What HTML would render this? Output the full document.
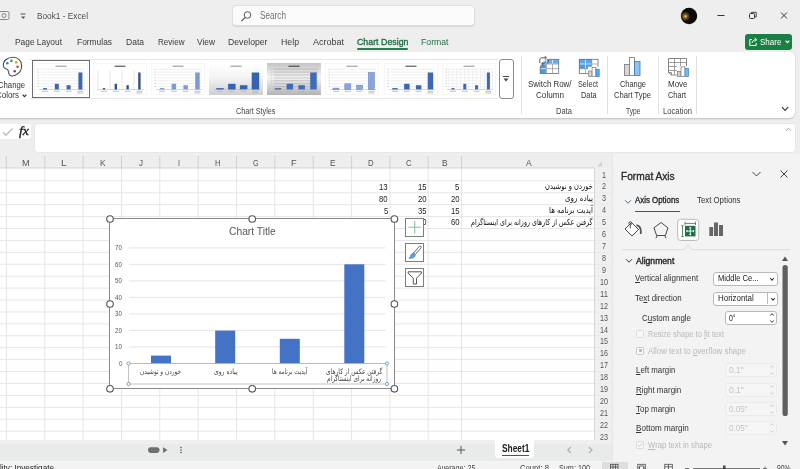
<!DOCTYPE html>
<html><head><meta charset="utf-8"><title>Book1 - Excel</title>
<style>
html,body{margin:0;padding:0;}
body{width:800px;height:469px;overflow:hidden;background:#eeeeef;font-family:"Liberation Sans","DejaVu Sans",sans-serif;color:#333;position:relative;font-size:10px;}
.a{position:absolute;white-space:nowrap;}
.t{position:absolute;white-space:nowrap;line-height:12px;height:12px;transform-origin:0 50%;}
.fa{font-family:"DejaVu Sans","Liberation Sans",sans-serif;}
.u{text-decoration:underline;}
</style></head><body><div id="app" style="position:absolute;left:0;top:0;width:800px;height:469px;will-change:transform">

<div id="t0" class="t" style="left:37px;top:10.30px;font-size:9.5px;color:#444;transform:scaleX(0.8699);text-shadow:0 0 1.500px #fff,0 0 2px #fff;">Book1 - Excel</div>
<svg class="a" style="left:0;top:8px" width="30" height="14" viewBox="0 0 30 14"><rect x="-2" y="3.5" width="11" height="8" rx="1.5" fill="none" stroke="#888" stroke-width="1"/><circle cx="4" cy="7.500" r="2" fill="none" stroke="#888"/><path d="M20.500 6h5" stroke="#555" stroke-width="1"/><path d="M21 8.500l2.200 2.400 2.200-2.400z" fill="#555"/></svg>
<div class="a" style="left:232px;top:5px;width:243px;height:21px;background:#fbfbfb;border:1px solid #dedede;border-radius:4px;box-sizing:border-box;box-shadow:0 1px 1px rgba(0,0,0,.10)"></div>
<svg class="a" style="left:240px;top:9.600px" width="13" height="13" viewBox="0 0 13 13"><circle cx="7.500" cy="5" r="3.300" fill="none" stroke="#555" stroke-width="1"/><path d="M5 7.600L1.500 11" stroke="#555" stroke-width="1.100"/></svg>
<div id="t1" class="t" style="left:259.5px;top:10.40px;font-size:10px;color:#707070;transform:scaleX(0.8205);">Search</div>
<svg class="a" style="left:680px;top:7px" width="18" height="18" viewBox="0 0 18 18"><defs><radialGradient id="av" cx="0.280" cy="0.520" r="0.300"><stop offset="0" stop-color="#f0d890"/><stop offset="0.350" stop-color="#8a6420"/><stop offset="1" stop-color="#0c0a08"/></radialGradient></defs><circle cx="9" cy="9" r="8.200" fill="url(#av)"/></svg>
<svg class="a" style="left:710px;top:8px" width="90" height="16" viewBox="0 0 90 16"><path d="M7.500 7.500h7" stroke="#333" stroke-width="1"/><rect x="39.500" y="5.500" width="5" height="5" rx="1" fill="none" stroke="#333"/><path d="M41.500 5.500v-1.200h4.700v4.700h-1.500" fill="none" stroke="#333" stroke-width="0.900"/><path d="M71 4.500l6 6M77 4.500l-6 6" stroke="#333" stroke-width="1"/></svg>
<div id="t2" class="t" style="left:15px;top:36.00px;font-size:9.5px;color:#3a3a3a;transform:scaleX(0.8808);">Page Layout</div>
<div id="t3" class="t" style="left:76.5px;top:36.00px;font-size:9.5px;color:#3a3a3a;transform:scaleX(0.8840);">Formulas</div>
<div id="t4" class="t" style="left:125.5px;top:36.00px;font-size:9.5px;color:#3a3a3a;transform:scaleX(0.8965);">Data</div>
<div id="t5" class="t" style="left:157.5px;top:36.00px;font-size:9.5px;color:#3a3a3a;transform:scaleX(0.8506);">Review</div>
<div id="t6" class="t" style="left:197px;top:36.00px;font-size:9.5px;color:#3a3a3a;transform:scaleX(0.8814);">View</div>
<div id="t7" class="t" style="left:228px;top:36.00px;font-size:9.5px;color:#3a3a3a;transform:scaleX(0.9120);">Developer</div>
<div id="t8" class="t" style="left:281px;top:36.00px;font-size:9.5px;color:#3a3a3a;transform:scaleX(0.9209);">Help</div>
<div id="t9" class="t" style="left:312.5px;top:36.00px;font-size:9.5px;color:#3a3a3a;transform:scaleX(0.9466);">Acrobat</div>
<div id="t10" class="t" style="left:356.5px;top:36.00px;font-size:9.5px;color:#1f6f46;-webkit-text-stroke:0.350px currentColor;transform:scaleX(0.9287);">Chart Design</div>
<div class="a" style="left:357px;top:48.200px;width:51px;height:1.700px;background:#2a7d50;border-radius:1px"></div>
<div id="t11" class="t" style="left:421px;top:36.00px;font-size:9.5px;color:#1f6f46;transform:scaleX(0.9138);">Format</div>
<div class="a" style="left:745px;top:34px;width:47px;height:16px;background:#1a7f43;border-radius:3px;"></div>
<svg class="a" style="left:748px;top:36px" width="11" height="11" viewBox="0 0 11 11"><path d="M4 3.500H1.800v6h6.400V7" fill="none" stroke="#fff" stroke-width="1"/><path d="M4 7c.300-2 1.600-3.200 4-3.200M6.600 1.800l2 2-2 2" fill="none" stroke="#fff" stroke-width="1"/></svg>
<div id="t12" class="t" style="left:759.5px;top:36.00px;font-size:9.5px;color:#fff;transform:scaleX(0.8478);">Share</div>
<svg class="a" style="left:785px;top:40px" width="5" height="4" viewBox="0 0 5 4"><path d="M0.600 0.700l1.900 2 1.900-2" fill="none" stroke="#fff" stroke-width="1.200"/></svg>
<div class="a" style="left:-8px;top:51.500px;width:802.500px;height:66px;background:#fff;border-radius:0 6px 6px 0;box-shadow:0 1px 2px rgba(0,0,0,.20)"></div>
<svg class="a" style="left:0px;top:55px" width="26" height="24" viewBox="0 0 26 24"><path d="M13 2.300C7 2.300 3 6 3.300 10.500c.3 3.300 2.600 3.200 4 3.900 1.600.8 1 2.800 1.600 4.300.8 2.200 3.300 2.900 5.800 1.900 4-1.600 7-5.600 7-10C21.700 5.800 18 2.300 13 2.300z" fill="#fff" stroke="#4f4f4f" stroke-width="1.100"/><circle cx="7.300" cy="8.300" r="1.300" fill="#3b78c9"/><circle cx="11.400" cy="5.900" r="1.300" fill="#3f9e5a"/><circle cx="16.200" cy="7.200" r="1.300" fill="#d99a3c"/><circle cx="17.600" cy="11.800" r="1.300" fill="#c8432b"/><circle cx="14.700" cy="16.300" r="1.300" fill="#7d3f98"/></svg>
<div id="t13" class="t" style="left:-2px;top:78.60px;font-size:9.5px;color:#333;transform:scaleX(0.8113);">Change</div>
<div id="t14" class="t" style="left:-4px;top:89.10px;font-size:9.5px;color:#333;transform:scaleX(0.8378);">Colors</div>
<svg class="a" style="left:21.500px;top:93.500px" width="5" height="4" viewBox="0 0 5 4"><path d="M0.600 0.700l1.900 2 1.900-2" fill="none" stroke="#333" stroke-width="1.200"/></svg>
<div class="a" style="left:30px;top:59px;width:468px;height:40px;border-top:1px solid #e6e6e6;border-bottom:1px solid #e6e6e6;box-sizing:border-box;"></div>
<div class="a" style="left:31.500px;top:60px;width:58px;height:38px;border:1px solid #6e6e6e;box-sizing:border-box;background:#fff"></div>
<svg class="a" style="left:33.5px;top:63px" width="54" height="32" viewBox="0 0 54 32"><rect x="0.250" y="0.250" width="53.5" height="31.5" fill="#fff" stroke="#ededed" stroke-width="0.500"/><rect x="21.5" y="2.600" width="11" height="1.300" fill="#a8a8a8"/><path d="M6.500 23.6H51" stroke="#e6e6e6" stroke-width="0.600"/><rect x="3.500" y="23.2" width="1.600" height="0.800" fill="#c4c4c4"/><path d="M6.500 20.7H51" stroke="#e6e6e6" stroke-width="0.600"/><rect x="3.500" y="20.3" width="1.600" height="0.800" fill="#c4c4c4"/><path d="M6.500 17.8H51" stroke="#e6e6e6" stroke-width="0.600"/><rect x="3.500" y="17.4" width="1.600" height="0.800" fill="#c4c4c4"/><path d="M6.500 14.9H51" stroke="#e6e6e6" stroke-width="0.600"/><rect x="3.500" y="14.5" width="1.600" height="0.800" fill="#c4c4c4"/><path d="M6.500 12.0H51" stroke="#e6e6e6" stroke-width="0.600"/><rect x="3.500" y="11.6" width="1.600" height="0.800" fill="#c4c4c4"/><path d="M6.500 9.1H51" stroke="#e6e6e6" stroke-width="0.600"/><rect x="3.500" y="8.7" width="1.600" height="0.800" fill="#c4c4c4"/><path d="M6.500 6.2H51" stroke="#e6e6e6" stroke-width="0.600"/><rect x="3.500" y="5.8" width="1.600" height="0.800" fill="#c4c4c4"/><path d="M5 26.5H51" stroke="#bdbdbd" stroke-width="0.600"/><rect x="9.0" y="25.1" width="4" height="1.4" fill="#3f66b0"/><rect x="8.0" y="27.800" width="6" height="0.900" fill="#b8b8b8"/><rect x="20.8" y="20.8" width="4" height="5.7" fill="#3f66b0"/><rect x="19.8" y="27.800" width="6" height="0.900" fill="#b8b8b8"/><rect x="32.6" y="22.2" width="4" height="4.2" fill="#3f66b0"/><rect x="31.6" y="27.800" width="6" height="0.900" fill="#b8b8b8"/><rect x="44.4" y="9.5" width="4" height="17.0" fill="#3f66b0"/><rect x="43.4" y="27.800" width="6" height="0.900" fill="#b8b8b8"/><rect x="43.4" y="29.500" width="6" height="0.900" fill="#b8b8b8"/></svg>
<svg class="a" style="left:93px;top:63px" width="54" height="32" viewBox="0 0 54 32"><rect x="0.250" y="0.250" width="53.5" height="31.5" fill="#fff" stroke="#ededed" stroke-width="0.500"/><rect x="21.5" y="2.600" width="11" height="1.300" fill="#666"/><path d="M5 7V27.5" stroke="#dadada" stroke-width="0.600"/><path d="M17 7V27.5" stroke="#dadada" stroke-width="0.600"/><path d="M29 7V27.5" stroke="#dadada" stroke-width="0.600"/><path d="M41 7V27.5" stroke="#dadada" stroke-width="0.600"/><path d="M5 26.5H51" stroke="#bdbdbd" stroke-width="0.600"/><rect x="9.8" y="25.1" width="2.4" height="1.4" fill="#2f528f"/><rect x="8.0" y="27.800" width="6" height="0.900" fill="#b8b8b8"/><rect x="21.6" y="20.8" width="2.4" height="5.7" fill="#2f528f"/><rect x="19.8" y="27.800" width="6" height="0.900" fill="#b8b8b8"/><rect x="33.4" y="22.2" width="2.4" height="4.2" fill="#2f528f"/><rect x="31.6" y="27.800" width="6" height="0.900" fill="#b8b8b8"/><rect x="45.2" y="9.5" width="2.4" height="17.0" fill="#2f528f"/><rect x="43.4" y="27.800" width="6" height="0.900" fill="#b8b8b8"/><rect x="43.4" y="29.500" width="6" height="0.900" fill="#b8b8b8"/></svg>
<svg class="a" style="left:151px;top:63px" width="54" height="32" viewBox="0 0 54 32"><rect x="0.250" y="0.250" width="53.5" height="31.5" fill="#fff" stroke="#ededed" stroke-width="0.500"/><rect x="21.5" y="2.600" width="11" height="1.300" fill="#a8a8a8"/><path d="M6.500 23.6H51" stroke="#e6e6e6" stroke-width="0.600"/><rect x="3.500" y="23.2" width="1.600" height="0.800" fill="#c4c4c4"/><path d="M6.500 20.7H51" stroke="#e6e6e6" stroke-width="0.600"/><rect x="3.500" y="20.3" width="1.600" height="0.800" fill="#c4c4c4"/><path d="M6.500 17.8H51" stroke="#e6e6e6" stroke-width="0.600"/><rect x="3.500" y="17.4" width="1.600" height="0.800" fill="#c4c4c4"/><path d="M6.500 14.9H51" stroke="#e6e6e6" stroke-width="0.600"/><rect x="3.500" y="14.5" width="1.600" height="0.800" fill="#c4c4c4"/><path d="M6.500 12.0H51" stroke="#e6e6e6" stroke-width="0.600"/><rect x="3.500" y="11.6" width="1.600" height="0.800" fill="#c4c4c4"/><path d="M6.500 9.1H51" stroke="#e6e6e6" stroke-width="0.600"/><rect x="3.500" y="8.7" width="1.600" height="0.800" fill="#c4c4c4"/><path d="M6.500 6.2H51" stroke="#e6e6e6" stroke-width="0.600"/><rect x="3.500" y="5.8" width="1.600" height="0.800" fill="#c4c4c4"/><path d="M5 26.5H51" stroke="#bdbdbd" stroke-width="0.600"/><rect x="8.8" y="25.1" width="4.5" height="1.4" fill="#7d9bd1"/><rect x="8.0" y="27.800" width="6" height="0.900" fill="#b8b8b8"/><rect x="20.6" y="20.8" width="4.5" height="5.7" fill="#7d9bd1"/><rect x="19.8" y="27.800" width="6" height="0.900" fill="#b8b8b8"/><rect x="32.4" y="22.2" width="4.5" height="4.2" fill="#7d9bd1"/><rect x="31.6" y="27.800" width="6" height="0.900" fill="#b8b8b8"/><rect x="44.2" y="9.5" width="4.5" height="17.0" fill="#7d9bd1"/><rect x="43.4" y="27.800" width="6" height="0.900" fill="#b8b8b8"/><rect x="43.4" y="29.500" width="6" height="0.900" fill="#b8b8b8"/></svg>
<svg class="a" style="left:209px;top:63px" width="54" height="32" viewBox="0 0 54 32"><defs><linearGradient id="g4" x1="0" y1="0" x2="0" y2="1"><stop offset="0" stop-color="#fff"/><stop offset="0.450" stop-color="#f4f4f4"/><stop offset="1" stop-color="#cfcfcf"/></linearGradient></defs><rect width="54" height="32" fill="url(#g4)"/><rect x="21.5" y="2.600" width="11" height="1.300" fill="#a8a8a8"/><path d="M5 26.5H51" stroke="#bdbdbd" stroke-width="0.600"/><rect x="7.2" y="25.1" width="7.5" height="1.4" fill="#3463b5"/><rect x="8.0" y="27.800" width="6" height="0.900" fill="#b8b8b8"/><rect x="19.1" y="20.8" width="7.5" height="5.7" fill="#3463b5"/><rect x="19.8" y="27.800" width="6" height="0.900" fill="#b8b8b8"/><rect x="30.9" y="22.2" width="7.5" height="4.2" fill="#3463b5"/><rect x="31.6" y="27.800" width="6" height="0.900" fill="#b8b8b8"/><rect x="42.7" y="9.5" width="7.5" height="17.0" fill="#3463b5"/><rect x="43.4" y="27.800" width="6" height="0.900" fill="#b8b8b8"/><rect x="43.4" y="29.500" width="6" height="0.900" fill="#b8b8b8"/></svg>
<svg class="a" style="left:266.5px;top:63px" width="54" height="32" viewBox="0 0 54 32"><defs><linearGradient id="g5" x1="0" y1="0" x2="0" y2="1"><stop offset="0" stop-color="#c4c4c4"/><stop offset="0.450" stop-color="#f4f4f4"/><stop offset="1" stop-color="#b4b4b4"/></linearGradient></defs><rect width="54" height="32" fill="url(#g5)"/><rect x="21.5" y="2.600" width="11" height="1.300" fill="#555"/><path d="M6.500 23.6H51" stroke="#a6a6a6" stroke-width="0.600"/><rect x="3.500" y="23.2" width="1.600" height="0.800" fill="#c4c4c4"/><path d="M6.500 20.7H51" stroke="#a6a6a6" stroke-width="0.600"/><rect x="3.500" y="20.3" width="1.600" height="0.800" fill="#c4c4c4"/><path d="M6.500 17.8H51" stroke="#a6a6a6" stroke-width="0.600"/><rect x="3.500" y="17.4" width="1.600" height="0.800" fill="#c4c4c4"/><path d="M6.500 14.9H51" stroke="#a6a6a6" stroke-width="0.600"/><rect x="3.500" y="14.5" width="1.600" height="0.800" fill="#c4c4c4"/><path d="M6.500 12.0H51" stroke="#a6a6a6" stroke-width="0.600"/><rect x="3.500" y="11.6" width="1.600" height="0.800" fill="#c4c4c4"/><path d="M6.500 9.1H51" stroke="#a6a6a6" stroke-width="0.600"/><rect x="3.500" y="8.7" width="1.600" height="0.800" fill="#c4c4c4"/><path d="M6.500 6.2H51" stroke="#a6a6a6" stroke-width="0.600"/><rect x="3.500" y="5.8" width="1.600" height="0.800" fill="#c4c4c4"/><path d="M5 26.5H51" stroke="#bdbdbd" stroke-width="0.600"/><rect x="7.8" y="25.1" width="6.5" height="1.4" fill="#3f6cb8"/><rect x="8.0" y="27.800" width="6" height="0.900" fill="#b8b8b8"/><rect x="19.6" y="20.8" width="6.5" height="5.7" fill="#3f6cb8"/><rect x="19.8" y="27.800" width="6" height="0.900" fill="#b8b8b8"/><rect x="31.4" y="22.2" width="6.5" height="4.2" fill="#3f6cb8"/><rect x="31.6" y="27.800" width="6" height="0.900" fill="#b8b8b8"/><rect x="43.2" y="9.5" width="6.5" height="17.0" fill="#3f6cb8"/><rect x="43.4" y="27.800" width="6" height="0.900" fill="#b8b8b8"/><rect x="43.4" y="29.500" width="6" height="0.900" fill="#b8b8b8"/></svg>
<svg class="a" style="left:325px;top:63px" width="54" height="32" viewBox="0 0 54 32"><rect x="0.250" y="0.250" width="53.5" height="31.5" fill="#fff" stroke="#ededed" stroke-width="0.500"/><rect x="21.5" y="2.600" width="11" height="1.300" fill="#a8a8a8"/><path d="M6.500 23.6H51" stroke="#e6e6e6" stroke-width="0.600"/><rect x="3.500" y="23.2" width="1.600" height="0.800" fill="#c4c4c4"/><path d="M6.500 20.7H51" stroke="#e6e6e6" stroke-width="0.600"/><rect x="3.500" y="20.3" width="1.600" height="0.800" fill="#c4c4c4"/><path d="M6.500 17.8H51" stroke="#e6e6e6" stroke-width="0.600"/><rect x="3.500" y="17.4" width="1.600" height="0.800" fill="#c4c4c4"/><path d="M6.500 14.9H51" stroke="#e6e6e6" stroke-width="0.600"/><rect x="3.500" y="14.5" width="1.600" height="0.800" fill="#c4c4c4"/><path d="M6.500 12.0H51" stroke="#e6e6e6" stroke-width="0.600"/><rect x="3.500" y="11.6" width="1.600" height="0.800" fill="#c4c4c4"/><path d="M6.500 9.1H51" stroke="#e6e6e6" stroke-width="0.600"/><rect x="3.500" y="8.7" width="1.600" height="0.800" fill="#c4c4c4"/><path d="M6.500 6.2H51" stroke="#e6e6e6" stroke-width="0.600"/><rect x="3.500" y="5.8" width="1.600" height="0.800" fill="#c4c4c4"/><path d="M5 26.5H51" stroke="#bdbdbd" stroke-width="0.600"/><rect x="8.0" y="25.1" width="6" height="1.4" fill="#8aa5da" stroke="#5b7fc7" stroke-width="0.500"/><rect x="8.0" y="27.800" width="6" height="0.900" fill="#b8b8b8"/><rect x="19.8" y="20.8" width="6" height="5.7" fill="#8aa5da" stroke="#5b7fc7" stroke-width="0.500"/><rect x="19.8" y="27.800" width="6" height="0.900" fill="#b8b8b8"/><rect x="31.6" y="22.2" width="6" height="4.2" fill="#8aa5da" stroke="#5b7fc7" stroke-width="0.500"/><rect x="31.6" y="27.800" width="6" height="0.900" fill="#b8b8b8"/><rect x="43.4" y="9.5" width="6" height="17.0" fill="#8aa5da" stroke="#5b7fc7" stroke-width="0.500"/><rect x="43.4" y="27.800" width="6" height="0.900" fill="#b8b8b8"/><rect x="43.4" y="29.500" width="6" height="0.900" fill="#b8b8b8"/></svg>
<svg class="a" style="left:383.5px;top:63px" width="54" height="32" viewBox="0 0 54 32"><rect x="0.250" y="0.250" width="53.5" height="31.5" fill="#fff" stroke="#ededed" stroke-width="0.500"/><rect x="21.5" y="2.600" width="11" height="1.300" fill="#666"/><path d="M6.500 23.6H51" stroke="#e6e6e6" stroke-width="0.600"/><rect x="3.500" y="23.2" width="1.600" height="0.800" fill="#c4c4c4"/><path d="M6.500 20.7H51" stroke="#e6e6e6" stroke-width="0.600"/><rect x="3.500" y="20.3" width="1.600" height="0.800" fill="#c4c4c4"/><path d="M6.500 17.8H51" stroke="#e6e6e6" stroke-width="0.600"/><rect x="3.500" y="17.4" width="1.600" height="0.800" fill="#c4c4c4"/><path d="M6.500 14.9H51" stroke="#e6e6e6" stroke-width="0.600"/><rect x="3.500" y="14.5" width="1.600" height="0.800" fill="#c4c4c4"/><path d="M6.500 12.0H51" stroke="#e6e6e6" stroke-width="0.600"/><rect x="3.500" y="11.6" width="1.600" height="0.800" fill="#c4c4c4"/><path d="M6.500 9.1H51" stroke="#e6e6e6" stroke-width="0.600"/><rect x="3.500" y="8.7" width="1.600" height="0.800" fill="#c4c4c4"/><path d="M6.500 6.2H51" stroke="#e6e6e6" stroke-width="0.600"/><rect x="3.500" y="5.8" width="1.600" height="0.800" fill="#c4c4c4"/><path d="M5 26.5H51" stroke="#bdbdbd" stroke-width="0.600"/><rect x="8.2" y="25.1" width="5.5" height="1.4" fill="#3b68b8"/><rect x="8.0" y="27.800" width="6" height="0.900" fill="#b8b8b8"/><rect x="20.1" y="20.8" width="5.5" height="5.7" fill="#3b68b8"/><rect x="19.8" y="27.800" width="6" height="0.900" fill="#b8b8b8"/><rect x="31.9" y="22.2" width="5.5" height="4.2" fill="#3b68b8"/><rect x="31.6" y="27.800" width="6" height="0.900" fill="#b8b8b8"/><rect x="43.7" y="9.5" width="5.5" height="17.0" fill="#3b68b8"/><rect x="43.4" y="27.800" width="6" height="0.900" fill="#b8b8b8"/><rect x="43.4" y="29.500" width="6" height="0.900" fill="#b8b8b8"/></svg>
<svg class="a" style="left:442px;top:63px" width="54" height="32" viewBox="0 0 54 32"><rect x="0.250" y="0.250" width="53.5" height="31.5" fill="#fff" stroke="#ededed" stroke-width="0.500"/><rect x="21.5" y="2.600" width="11" height="1.300" fill="#a8a8a8"/><path d="M6.500 23.6H51" stroke="#e6e6e6" stroke-width="0.600"/><rect x="3.500" y="23.2" width="1.600" height="0.800" fill="#c4c4c4"/><path d="M6.500 20.7H51" stroke="#e6e6e6" stroke-width="0.600"/><rect x="3.500" y="20.3" width="1.600" height="0.800" fill="#c4c4c4"/><path d="M6.500 17.8H51" stroke="#e6e6e6" stroke-width="0.600"/><rect x="3.500" y="17.4" width="1.600" height="0.800" fill="#c4c4c4"/><path d="M6.500 14.9H51" stroke="#e6e6e6" stroke-width="0.600"/><rect x="3.500" y="14.5" width="1.600" height="0.800" fill="#c4c4c4"/><path d="M6.500 12.0H51" stroke="#e6e6e6" stroke-width="0.600"/><rect x="3.500" y="11.6" width="1.600" height="0.800" fill="#c4c4c4"/><path d="M6.500 9.1H51" stroke="#e6e6e6" stroke-width="0.600"/><rect x="3.500" y="8.7" width="1.600" height="0.800" fill="#c4c4c4"/><path d="M6.500 6.2H51" stroke="#e6e6e6" stroke-width="0.600"/><rect x="3.500" y="5.8" width="1.600" height="0.800" fill="#c4c4c4"/><path d="M6.5 6.200V26.5" stroke="#dcdcdc" stroke-width="0.600" stroke-dasharray="1 1"/><path d="M10.5 6.200V26.5" stroke="#dcdcdc" stroke-width="0.600" stroke-dasharray="1 1"/><path d="M14.5 6.200V26.5" stroke="#dcdcdc" stroke-width="0.600" stroke-dasharray="1 1"/><path d="M18.5 6.200V26.5" stroke="#dcdcdc" stroke-width="0.600" stroke-dasharray="1 1"/><path d="M22.5 6.200V26.5" stroke="#dcdcdc" stroke-width="0.600" stroke-dasharray="1 1"/><path d="M26.5 6.200V26.5" stroke="#dcdcdc" stroke-width="0.600" stroke-dasharray="1 1"/><path d="M30.5 6.200V26.5" stroke="#dcdcdc" stroke-width="0.600" stroke-dasharray="1 1"/><path d="M34.5 6.200V26.5" stroke="#dcdcdc" stroke-width="0.600" stroke-dasharray="1 1"/><path d="M38.5 6.200V26.5" stroke="#dcdcdc" stroke-width="0.600" stroke-dasharray="1 1"/><path d="M42.5 6.200V26.5" stroke="#dcdcdc" stroke-width="0.600" stroke-dasharray="1 1"/><path d="M46.5 6.200V26.5" stroke="#dcdcdc" stroke-width="0.600" stroke-dasharray="1 1"/><path d="M50.5 6.200V26.5" stroke="#dcdcdc" stroke-width="0.600" stroke-dasharray="1 1"/><path d="M5 26.5H51" stroke="#bdbdbd" stroke-width="0.600"/><rect x="9.5" y="25.1" width="3" height="1.4" fill="#3f66b0"/><rect x="8.0" y="27.800" width="6" height="0.900" fill="#b8b8b8"/><rect x="21.3" y="20.8" width="3" height="5.7" fill="#3f66b0"/><rect x="19.8" y="27.800" width="6" height="0.900" fill="#b8b8b8"/><rect x="33.1" y="22.2" width="3" height="4.2" fill="#3f66b0"/><rect x="31.6" y="27.800" width="6" height="0.900" fill="#b8b8b8"/><rect x="44.9" y="9.5" width="3" height="17.0" fill="#3f66b0"/><rect x="43.4" y="27.800" width="6" height="0.900" fill="#b8b8b8"/><rect x="43.4" y="29.500" width="6" height="0.900" fill="#b8b8b8"/></svg>
<div class="a" style="left:498.500px;top:58.500px;width:15px;height:40px;border:1px solid #8a8a8a;border-radius:3px;box-sizing:border-box;background:#fff"></div>
<svg class="a" style="left:502px;top:75px" width="8" height="8" viewBox="0 0 8 8"><path d="M1 1.500h6" stroke="#444" stroke-width="1"/><path d="M1.500 3.500h5L4 6.500z" fill="#444"/></svg>
<div id="t15" class="t" style="left:235.5px;top:104.70px;font-size:8.5px;color:#444;transform:scaleX(0.8532);">Chart Styles</div>
<div class="a" style="left:521px;top:56px;width:1px;height:58px;background:#e1e1e1"></div>
<div class="a" style="left:607px;top:56px;width:1px;height:58px;background:#e1e1e1"></div>
<div class="a" style="left:658px;top:56px;width:1px;height:58px;background:#e1e1e1"></div>
<div class="a" style="left:696px;top:56px;width:1px;height:58px;background:#e1e1e1"></div>
<svg class="a" style="left:538px;top:55px" width="24" height="22" viewBox="0 0 24 22"><rect x="2.200" y="4.300" width="18.500" height="14.100" fill="#fff"/><rect x="2.200" y="4.300" width="18.500" height="4.700" fill="#69aeea"/><rect x="2.200" y="4.300" width="6.200" height="14.100" fill="#4a9be0"/><path d="M2.200 9h18.500M2.200 13.700h18.500M8.400 4.300v14.100M14.500 4.300v14.100" stroke="#fff" stroke-width="0.700"/><path d="M8.400 9h12.300M8.400 13.700h12.300M14.500 9v9.400M8.400 9v9.400" stroke="#8a8a8a" stroke-width="0.700"/><rect x="2.200" y="4.300" width="18.500" height="14.100" fill="none" stroke="#5f6f80" stroke-width="0.800"/><path d="M0 0h13L0 13z" fill="#fff"/><path d="M1.800 8.200V4.800c0-1.300.7-2 2-2h4.400M6.600 0.900l1.900 1.900-1.900 1.900" fill="none" stroke="#4a4a4a" stroke-width="0.900"/><path d="M10.300 4.800v1.400c0 1.300-.7 2-2 2M5.500 10.600l-1.900-1.900 1.900-1.900M3.800 8.700h3" fill="none" stroke="#4a4a4a" stroke-width="0.900"/></svg>
<div id="t16" class="t" style="left:527.5px;top:78.40px;font-size:9.5px;color:#333;transform:scaleX(0.8323);">Switch Row/</div>
<div id="t17" class="t" style="left:536px;top:89.30px;font-size:9.5px;color:#333;transform:scaleX(0.8550);">Column</div>
<svg class="a" style="left:576px;top:56px" width="25" height="22" viewBox="0 0 25 22"><rect x="3.300" y="3.300" width="18.700" height="14.100" fill="#fff"/><rect x="3.300" y="3.300" width="12.400" height="9.400" fill="#4a9be0"/><rect x="3.300" y="3.300" width="12.400" height="4.700" fill="#5ea7e6"/><path d="M3.300 8h12.400M9.500 3.300v9.400" stroke="#fff" stroke-width="0.700"/><path d="M15.700 3.300v14.100M3.300 12.700h18.700M9.500 12.700v4.700M15.700 8h6.300" stroke="#8a8a8a" stroke-width="0.700"/><rect x="3.300" y="3.300" width="18.700" height="14.100" fill="none" stroke="#5f6f80" stroke-width="0.800"/><rect x="12" y="10.700" width="12" height="10.500" fill="#fff"/><rect x="12.700" y="15" width="3.400" height="5.500" fill="#d4d4d4" stroke="#777" stroke-width="0.700"/><rect x="16.100" y="11.500" width="3.800" height="9" fill="#fff" stroke="#777" stroke-width="0.700"/><rect x="19.900" y="13.200" width="3.300" height="7.300" fill="#5ea7e6" stroke="#2f7fcc" stroke-width="0.700"/></svg>
<div id="t18" class="t" style="left:578px;top:78.40px;font-size:9.5px;color:#333;transform:scaleX(0.7574);">Select</div>
<div id="t19" class="t" style="left:580.5px;top:89.30px;font-size:9.5px;color:#333;transform:scaleX(0.7720);">Data</div>
<div id="t20" class="t" style="left:556px;top:104.70px;font-size:8.5px;color:#444;transform:scaleX(0.8904);">Data</div>
<svg class="a" style="left:621px;top:55px" width="24" height="22" viewBox="0 0 24 22"><rect x="3.500" y="9.500" width="5" height="11" fill="#d6d6d6" stroke="#777" stroke-width="0.800"/><rect x="8.500" y="2.500" width="5" height="18" fill="#fff" stroke="#777" stroke-width="0.800"/><rect x="13.500" y="6.500" width="5.500" height="14" fill="#8cc4f0" stroke="#3b78b8" stroke-width="0.800"/></svg>
<div id="t21" class="t" style="left:620px;top:78.40px;font-size:9.5px;color:#333;transform:scaleX(0.7812);">Change</div>
<div id="t22" class="t" style="left:614px;top:89.30px;font-size:9.5px;color:#333;transform:scaleX(0.7992);">Chart Type</div>
<div id="t23" class="t" style="left:625.5px;top:104.70px;font-size:8.5px;color:#444;transform:scaleX(0.7864);">Type</div>
<svg class="a" style="left:666px;top:55px" width="24" height="24" viewBox="0 0 24 24"><path d="M2.500 3.500h18v12h-9v4.500h-6l-3-2.500z" fill="#fff" stroke="#666" stroke-width="0.800"/><path d="M2.500 7.500h18M2.500 11.500h18M2.500 15.500h9M8.500 3.500v16M14.500 3.500v12" stroke="#777" stroke-width="0.700"/><path d="M2.500 17.500h3v2.500" fill="none" stroke="#666" stroke-width="0.700"/><rect x="10.800" y="11" width="12.500" height="11" fill="#fff"/><rect x="11.500" y="16.500" width="3.500" height="5" fill="#d0d0d0" stroke="#777" stroke-width="0.700"/><rect x="15" y="11.800" width="4" height="9.700" fill="#fff" stroke="#777" stroke-width="0.700"/><rect x="19" y="13.500" width="3.500" height="8" fill="#7ab8ec" stroke="#3b82c4" stroke-width="0.700"/></svg>
<div id="t24" class="t" style="left:668px;top:78.40px;font-size:9.5px;color:#333;transform:scaleX(0.8393);">Move</div>
<div id="t25" class="t" style="left:668px;top:89.30px;font-size:9.5px;color:#333;transform:scaleX(0.7747);">Chart</div>
<div id="t26" class="t" style="left:663px;top:104.70px;font-size:8.5px;color:#444;transform:scaleX(0.9023);">Location</div>
<svg class="a" style="left:781px;top:105.500px" width="8" height="6" viewBox="0 0 8 6"><path d="M1 1.200l3.100 3.200 3.100-3.200" fill="none" stroke="#3a3a3a" stroke-width="1.200"/></svg>
<div class="a" style="left:-4px;top:124px;width:35px;height:15px;background:#fff;border-radius:3px;"></div>
<svg class="a" style="left:1.500px;top:127px" width="12" height="10" viewBox="0 0 12 10"><path d="M1 5.300l3 3 6.500-6.800" fill="none" stroke="#bdbdbd" stroke-width="1.300"/></svg>
<div id="t27" class="t" style="left:18.5px;top:125.00px;font-size:13.5px;color:#222;-webkit-text-stroke:0.350px currentColor;transform:scaleX(1.0256);font-family:'Liberation Serif',serif;font-style:italic;">fx</div>
<div class="a" style="left:35px;top:123.700px;width:759.500px;height:28.300px;background:#fff;border-radius:3px;box-shadow:0 0 0 0.500px rgba(0,0,0,.06)"></div>
<svg class="a" style="left:785px;top:127px" width="7" height="5" viewBox="0 0 7 5"><path d="M0.800 4l2.700-2.800 2.700 2.800" fill="none" stroke="#aaa" stroke-width="1"/></svg>
<div class="a" style="left:0;top:168px;width:594.5px;height:272px;background:#fff"></div>
<svg class="a" style="left:0;top:154px" width="612" height="290" viewBox="0 0 612 290"><path d="M6.4 2V14" stroke="#d0d0d0" stroke-width="1"/><path d="M6.4 14V286" stroke="#e6e6e6" stroke-width="1"/><path d="M44.8 2V14" stroke="#d0d0d0" stroke-width="1"/><path d="M44.8 14V286" stroke="#e6e6e6" stroke-width="1"/><path d="M83.1 2V14" stroke="#d0d0d0" stroke-width="1"/><path d="M83.1 14V286" stroke="#e6e6e6" stroke-width="1"/><path d="M121.5 2V14" stroke="#d0d0d0" stroke-width="1"/><path d="M121.5 14V286" stroke="#e6e6e6" stroke-width="1"/><path d="M159.8 2V14" stroke="#d0d0d0" stroke-width="1"/><path d="M159.8 14V286" stroke="#e6e6e6" stroke-width="1"/><path d="M198.2 2V14" stroke="#d0d0d0" stroke-width="1"/><path d="M198.2 14V286" stroke="#e6e6e6" stroke-width="1"/><path d="M236.5 2V14" stroke="#d0d0d0" stroke-width="1"/><path d="M236.5 14V286" stroke="#e6e6e6" stroke-width="1"/><path d="M274.8 2V14" stroke="#d0d0d0" stroke-width="1"/><path d="M274.8 14V286" stroke="#e6e6e6" stroke-width="1"/><path d="M313.2 2V14" stroke="#d0d0d0" stroke-width="1"/><path d="M313.2 14V286" stroke="#e6e6e6" stroke-width="1"/><path d="M351.6 2V14" stroke="#d0d0d0" stroke-width="1"/><path d="M351.6 14V286" stroke="#e6e6e6" stroke-width="1"/><path d="M389.9 2V14" stroke="#d0d0d0" stroke-width="1"/><path d="M389.9 14V286" stroke="#e6e6e6" stroke-width="1"/><path d="M428.2 2V14" stroke="#d0d0d0" stroke-width="1"/><path d="M428.2 14V286" stroke="#e6e6e6" stroke-width="1"/><path d="M461.6 2V14" stroke="#d0d0d0" stroke-width="1"/><path d="M461.6 14V286" stroke="#e6e6e6" stroke-width="1"/><path d="M0 14H594.5" stroke="#d4d4d4" stroke-width="1"/><path d="M0 26.82H612" stroke="#e6e6e6" stroke-width="1"/><path d="M0 38.74H612" stroke="#e6e6e6" stroke-width="1"/><path d="M0 50.66H612" stroke="#e6e6e6" stroke-width="1"/><path d="M0 62.58H612" stroke="#e6e6e6" stroke-width="1"/><path d="M0 74.50H612" stroke="#e6e6e6" stroke-width="1"/><path d="M0 86.42H612" stroke="#e6e6e6" stroke-width="1"/><path d="M0 98.34H612" stroke="#e6e6e6" stroke-width="1"/><path d="M0 110.26H612" stroke="#e6e6e6" stroke-width="1"/><path d="M0 122.18H612" stroke="#e6e6e6" stroke-width="1"/><path d="M0 134.10H612" stroke="#e6e6e6" stroke-width="1"/><path d="M0 146.02H612" stroke="#e6e6e6" stroke-width="1"/><path d="M0 157.94H612" stroke="#e6e6e6" stroke-width="1"/><path d="M0 169.86H612" stroke="#e6e6e6" stroke-width="1"/><path d="M0 181.78H612" stroke="#e6e6e6" stroke-width="1"/><path d="M0 193.70H612" stroke="#e6e6e6" stroke-width="1"/><path d="M0 205.62H612" stroke="#e6e6e6" stroke-width="1"/><path d="M0 217.54H612" stroke="#e6e6e6" stroke-width="1"/><path d="M0 229.46H612" stroke="#e6e6e6" stroke-width="1"/><path d="M0 241.38H612" stroke="#e6e6e6" stroke-width="1"/><path d="M0 253.30H612" stroke="#e6e6e6" stroke-width="1"/><path d="M0 265.22H612" stroke="#e6e6e6" stroke-width="1"/><path d="M0 277.14H612" stroke="#e6e6e6" stroke-width="1"/><rect x="594.5" y="14.500" width="17" height="271.500" fill="#f0f0f0"/><path d="M594.5 26.82H611" stroke="#e8e8e8" stroke-width="0.800"/><path d="M594.5 38.74H611" stroke="#e8e8e8" stroke-width="0.800"/><path d="M594.5 50.66H611" stroke="#e8e8e8" stroke-width="0.800"/><path d="M594.5 62.58H611" stroke="#e8e8e8" stroke-width="0.800"/><path d="M594.5 74.50H611" stroke="#e8e8e8" stroke-width="0.800"/><path d="M594.5 86.42H611" stroke="#e8e8e8" stroke-width="0.800"/><path d="M594.5 98.34H611" stroke="#e8e8e8" stroke-width="0.800"/><path d="M594.5 110.26H611" stroke="#e8e8e8" stroke-width="0.800"/><path d="M594.5 122.18H611" stroke="#e8e8e8" stroke-width="0.800"/><path d="M594.5 134.10H611" stroke="#e8e8e8" stroke-width="0.800"/><path d="M594.5 146.02H611" stroke="#e8e8e8" stroke-width="0.800"/><path d="M594.5 157.94H611" stroke="#e8e8e8" stroke-width="0.800"/><path d="M594.5 169.86H611" stroke="#e8e8e8" stroke-width="0.800"/><path d="M594.5 181.78H611" stroke="#e8e8e8" stroke-width="0.800"/><path d="M594.5 193.70H611" stroke="#e8e8e8" stroke-width="0.800"/><path d="M594.5 205.62H611" stroke="#e8e8e8" stroke-width="0.800"/><path d="M594.5 217.54H611" stroke="#e8e8e8" stroke-width="0.800"/><path d="M594.5 229.46H611" stroke="#e8e8e8" stroke-width="0.800"/><path d="M594.5 241.38H611" stroke="#e8e8e8" stroke-width="0.800"/><path d="M594.5 253.30H611" stroke="#e8e8e8" stroke-width="0.800"/><path d="M594.5 265.22H611" stroke="#e8e8e8" stroke-width="0.800"/><path d="M594.5 277.14H611" stroke="#e8e8e8" stroke-width="0.800"/><path d="M594.5 14V286" stroke="#d6d6d6" stroke-width="1"/><path d="M602 12.500h-5l5-5z" fill="#d2d2d2"/></svg>
<div id="t28" class="t" style="left:22.0px;top:156.50px;font-size:9px;color:#555;transform:scaleX(1.0133);">M</div>
<div id="t29" class="t" style="left:61.2px;top:156.50px;font-size:9px;color:#555;transform:scaleX(1.1165);">L</div>
<div id="t30" class="t" style="left:99.5px;top:156.50px;font-size:9px;color:#555;transform:scaleX(0.9309);">K</div>
<div id="t31" class="t" style="left:138.6px;top:156.50px;font-size:9px;color:#555;transform:scaleX(0.8889);">J</div>
<div id="t32" class="t" style="left:178px;top:156.50px;font-size:9px;color:#555;transform:scaleX(0.7950);">I</div>
<div id="t33" class="t" style="left:214.5px;top:156.50px;font-size:9px;color:#555;transform:scaleX(0.8615);">H</div>
<div id="t34" class="t" style="left:252.89999999999998px;top:156.50px;font-size:9px;color:#555;transform:scaleX(0.7982);">G</div>
<div id="t35" class="t" style="left:291.2px;top:156.50px;font-size:9px;color:#555;transform:scaleX(1.0182);">F</div>
<div id="t36" class="t" style="left:329.7px;top:156.50px;font-size:9px;color:#555;transform:scaleX(0.9309);">E</div>
<div id="t37" class="t" style="left:368.0px;top:156.50px;font-size:9px;color:#555;transform:scaleX(0.8615);">D</div>
<div id="t38" class="t" style="left:406.3px;top:156.50px;font-size:9px;color:#555;transform:scaleX(0.8615);">C</div>
<div id="t39" class="t" style="left:442.4px;top:156.50px;font-size:9px;color:#555;transform:scaleX(0.9309);">B</div>
<div id="t40" class="t" style="left:525.5px;top:156.50px;font-size:9px;color:#555;transform:scaleX(0.9309);">A</div>
<div id="t41" class="t" style="left:602.0px;top:168.56px;font-size:9px;color:#555;transform:scaleX(0.7975);">1</div>
<div id="t42" class="t" style="left:602.0px;top:180.48px;font-size:9px;color:#555;transform:scaleX(0.7975);">2</div>
<div id="t43" class="t" style="left:602.0px;top:192.40px;font-size:9px;color:#555;transform:scaleX(0.7975);">3</div>
<div id="t44" class="t" style="left:602.0px;top:204.32px;font-size:9px;color:#555;transform:scaleX(0.7975);">4</div>
<div id="t45" class="t" style="left:602.0px;top:216.24px;font-size:9px;color:#555;transform:scaleX(0.7975);">5</div>
<div id="t46" class="t" style="left:602.0px;top:228.16px;font-size:9px;color:#555;transform:scaleX(0.7975);">6</div>
<div id="t47" class="t" style="left:602.0px;top:240.08px;font-size:9px;color:#555;transform:scaleX(0.7975);">7</div>
<div id="t48" class="t" style="left:602.0px;top:252.00px;font-size:9px;color:#555;transform:scaleX(0.7975);">8</div>
<div id="t49" class="t" style="left:602.0px;top:263.92px;font-size:9px;color:#555;transform:scaleX(0.7975);">9</div>
<div id="t50" class="t" style="left:600.0px;top:275.84px;font-size:9px;color:#555;transform:scaleX(0.7988);">10</div>
<div id="t51" class="t" style="left:600.0px;top:287.76px;font-size:9px;color:#555;transform:scaleX(0.8562);">11</div>
<div id="t52" class="t" style="left:600.0px;top:299.68px;font-size:9px;color:#555;transform:scaleX(0.7988);">12</div>
<div id="t53" class="t" style="left:600.0px;top:311.60px;font-size:9px;color:#555;transform:scaleX(0.7988);">13</div>
<div id="t54" class="t" style="left:600.0px;top:323.52px;font-size:9px;color:#555;transform:scaleX(0.7988);">14</div>
<div id="t55" class="t" style="left:600.0px;top:335.44px;font-size:9px;color:#555;transform:scaleX(0.7988);">15</div>
<div id="t56" class="t" style="left:600.0px;top:347.36px;font-size:9px;color:#555;transform:scaleX(0.7988);">16</div>
<div id="t57" class="t" style="left:600.0px;top:359.28px;font-size:9px;color:#555;transform:scaleX(0.7988);">17</div>
<div id="t58" class="t" style="left:600.0px;top:371.20px;font-size:9px;color:#555;transform:scaleX(0.7988);">18</div>
<div id="t59" class="t" style="left:600.0px;top:383.12px;font-size:9px;color:#555;transform:scaleX(0.7988);">19</div>
<div id="t60" class="t" style="left:600.0px;top:395.04px;font-size:9px;color:#555;transform:scaleX(0.7988);">20</div>
<div id="t61" class="t" style="left:600.0px;top:406.96px;font-size:9px;color:#555;transform:scaleX(0.7988);">21</div>
<div id="t62" class="t" style="left:600.0px;top:418.88px;font-size:9px;color:#555;transform:scaleX(0.7988);">22</div>
<div id="t63" class="t" style="left:600.0px;top:430.80px;font-size:9px;color:#555;transform:scaleX(0.7988);">23</div>
<div id="t64" class="t" style="left:379.4px;top:180.68px;font-size:8.5px;color:#222;transform:scaleX(0.9083);">13</div>
<div id="t65" class="t" style="left:417.59999999999997px;top:180.68px;font-size:8.5px;color:#222;transform:scaleX(0.9083);">15</div>
<div id="t66" class="t" style="left:455.2px;top:180.68px;font-size:8.5px;color:#222;transform:scaleX(0.9083);">5</div>
<div id="t67" class="t fa" dir="rtl" style="left:544.5px;top:179.98px;font-size:8.5px;color:#111;transform:scaleX(0.7942);">خوردن و نوشیدن</div>
<div id="t68" class="t" style="left:379.4px;top:192.60px;font-size:8.5px;color:#222;transform:scaleX(0.9083);">80</div>
<div id="t69" class="t" style="left:417.59999999999997px;top:192.60px;font-size:8.5px;color:#222;transform:scaleX(0.9083);">20</div>
<div id="t70" class="t" style="left:450.9px;top:192.60px;font-size:8.5px;color:#222;transform:scaleX(0.9083);">20</div>
<div id="t71" class="t fa" dir="rtl" style="left:564.5px;top:191.90px;font-size:8.5px;color:#111;transform:scaleX(0.8401);">پیاده روی</div>
<div id="t72" class="t" style="left:383.7px;top:204.52px;font-size:8.5px;color:#222;transform:scaleX(0.9083);">5</div>
<div id="t73" class="t" style="left:417.59999999999997px;top:204.52px;font-size:8.5px;color:#222;transform:scaleX(0.9083);">35</div>
<div id="t74" class="t" style="left:450.9px;top:204.52px;font-size:8.5px;color:#222;transform:scaleX(0.9083);">15</div>
<div id="t75" class="t fa" dir="rtl" style="left:548.5px;top:203.82px;font-size:8.5px;color:#111;transform:scaleX(0.8224);">آپدیت برنامه ها</div>
<div id="t76" class="t" style="left:417.59999999999997px;top:216.44px;font-size:8.5px;color:#222;transform:scaleX(0.9083);">40</div>
<div id="t77" class="t" style="left:450.9px;top:216.44px;font-size:8.5px;color:#222;transform:scaleX(0.9083);">60</div>
<div id="t78" class="t fa" dir="rtl" style="left:471.0px;top:215.74px;font-size:8.5px;color:#111;transform:scaleX(0.7424);">گرفتن عکس از کارهای روزانه برای اینستاگرام</div>
<div class="a" style="left:109.400px;top:218.400px;width:285.600px;height:171px;background:#fff;border:1.300px solid #8a8a8a;box-sizing:border-box;"></div>
<svg class="a" style="left:100px;top:210px" width="340" height="190" viewBox="100 210 340 190"><path d="M129 346.9H385.500" stroke="#dedede" stroke-width="0.800"/><path d="M129 330.4H385.500" stroke="#dedede" stroke-width="0.800"/><path d="M129 313.9H385.500" stroke="#dedede" stroke-width="0.800"/><path d="M129 297.4H385.500" stroke="#dedede" stroke-width="0.800"/><path d="M129 280.9H385.500" stroke="#dedede" stroke-width="0.800"/><path d="M129 264.4H385.500" stroke="#dedede" stroke-width="0.800"/><path d="M129 247.9H385.500" stroke="#dedede" stroke-width="0.800"/><path d="M129 363.500H387" stroke="#c4c4c4" stroke-width="0.800"/><rect x="151" y="355.6" width="20" height="7.8" fill="#4472c4"/><rect x="215.2" y="330.6" width="20" height="32.8" fill="#4472c4"/><rect x="279.8" y="338.8" width="20" height="24.6" fill="#4472c4"/><rect x="344.3" y="264.3" width="20" height="99.1" fill="#4472c4"/><rect x="128.500" y="363.500" width="258.500" height="20.500" fill="none" stroke="#b4b4b4" stroke-width="0.800"/><circle cx="128.5" cy="363.5" r="1.600" fill="#fff" stroke="#4a90c8" stroke-width="0.800"/><circle cx="387" cy="363.5" r="1.600" fill="#fff" stroke="#4a90c8" stroke-width="0.800"/><circle cx="128.5" cy="384" r="1.600" fill="#fff" stroke="#4a90c8" stroke-width="0.800"/><circle cx="387" cy="384" r="1.600" fill="#fff" stroke="#4a90c8" stroke-width="0.800"/><circle cx="110" cy="219" r="3.300" fill="#fff" stroke="#555" stroke-width="1.100"/><circle cx="252.2" cy="219" r="3.300" fill="#fff" stroke="#555" stroke-width="1.100"/><circle cx="394.4" cy="219" r="3.300" fill="#fff" stroke="#555" stroke-width="1.100"/><circle cx="110" cy="304" r="3.300" fill="#fff" stroke="#555" stroke-width="1.100"/><circle cx="394.4" cy="304" r="3.300" fill="#fff" stroke="#555" stroke-width="1.100"/><circle cx="110" cy="388.8" r="3.300" fill="#fff" stroke="#555" stroke-width="1.100"/><circle cx="252.2" cy="388.8" r="3.300" fill="#fff" stroke="#555" stroke-width="1.100"/><circle cx="394.4" cy="388.8" r="3.300" fill="#fff" stroke="#555" stroke-width="1.100"/></svg>
<div id="t79" class="t" style="left:228.6px;top:224.60px;font-size:11px;color:#595959;transform:scaleX(0.9334);">Chart Title</div>
<div id="t80" class="t" style="left:118.5px;top:357.80px;font-size:8px;color:#555;transform:scaleX(0.7635);">0</div>
<div id="t81" class="t" style="left:115.10000000000001px;top:341.30px;font-size:8px;color:#555;transform:scaleX(0.7635);">10</div>
<div id="t82" class="t" style="left:115.10000000000001px;top:324.80px;font-size:8px;color:#555;transform:scaleX(0.7635);">20</div>
<div id="t83" class="t" style="left:115.10000000000001px;top:308.30px;font-size:8px;color:#555;transform:scaleX(0.7635);">30</div>
<div id="t84" class="t" style="left:115.10000000000001px;top:291.80px;font-size:8px;color:#555;transform:scaleX(0.7635);">40</div>
<div id="t85" class="t" style="left:115.10000000000001px;top:275.30px;font-size:8px;color:#555;transform:scaleX(0.7635);">50</div>
<div id="t86" class="t" style="left:115.10000000000001px;top:258.80px;font-size:8px;color:#555;transform:scaleX(0.7635);">60</div>
<div id="t87" class="t" style="left:115.10000000000001px;top:242.30px;font-size:8px;color:#555;transform:scaleX(0.7635);">70</div>
<div id="t88" class="t fa" dir="rtl" style="left:140.3px;top:365.70px;font-size:7.5px;color:#444;transform:scaleX(0.7726);">خوردن و نوشیدن</div>
<div id="t89" class="t fa" dir="rtl" style="left:214px;top:365.70px;font-size:7.5px;color:#444;transform:scaleX(0.8026);">پیاده روی</div>
<div id="t90" class="t fa" dir="rtl" style="left:271.6px;top:365.70px;font-size:7.5px;color:#444;transform:scaleX(0.7497);">آپدیت برنامه ها</div>
<div id="t91" class="t fa" dir="rtl" style="left:326px;top:365.50px;font-size:7.5px;color:#444;transform:scaleX(0.7844);">گرفتن عکس از کارهای</div>
<div id="t92" class="t fa" dir="rtl" style="left:327px;top:373.30px;font-size:7.5px;color:#444;transform:scaleX(0.7701);">روزانه برای اینستاگرام</div>
<div class="a" style="left:405px;top:218px;width:19px;height:18.500px;background:#fff;border:1px solid #7e7e7e;box-sizing:border-box;"></div>
<div class="a" style="left:405px;top:243px;width:19px;height:18.500px;background:#fff;border:1px solid #7e7e7e;box-sizing:border-box;"></div>
<div class="a" style="left:405px;top:268px;width:19px;height:18.500px;background:#fff;border:1px solid #7e7e7e;box-sizing:border-box;"></div>
<svg class="a" style="left:405px;top:218px" width="20" height="19" viewBox="0 0 20 19"><path d="M9.700 3v12.500M3.500 9.300h12.500" stroke="#86c0a0" stroke-width="1.100"/></svg>
<svg class="a" style="left:405px;top:243px" width="20" height="19" viewBox="0 0 20 19"><path d="M15.600 3.200c.7.500.7 1.200.2 1.900L10.300 11.500 8.600 10l5.500-6.400c.4-.5 1-.7 1.500-.4z" fill="#fff" stroke="#555" stroke-width="0.900"/><path d="M8.300 10.300l1.800 1.600c.3 1.800-1.400 3.600-6.300 3.400 1.400-.7 1.600-1.600 2-3 .3-1.200 1.200-2 2.500-2z" fill="#5aa0dc" stroke="#3b82c4" stroke-width="0.700"/></svg>
<svg class="a" style="left:405px;top:268px" width="20" height="19" viewBox="0 0 20 19"><path d="M3 3.800h13.500v1.200l-5 5.200v5.800h-3.200v-5.800l-5.300-5.200z" fill="#fff" stroke="#555" stroke-width="1"/></svg>
<div class="a" style="left:0;top:440px;width:611.500px;height:5px;background:#eef0ef"></div><div class="a" style="left:-6px;top:444px;width:617.500px;height:17px;background:#e8ebe9;border-radius:0 0 5px 0"></div>
<svg class="a" style="left:140px;top:444px" width="50" height="12" viewBox="0 0 50 12"><rect x="8" y="3.300" width="11.500" height="5.600" rx="2.800" fill="#6f6f6f"/><path d="M23 3.300l4.500 2.800-4.500 2.800z" fill="#6f6f6f"/><circle cx="41" cy="3.500" r="0.800" fill="#555"/><circle cx="41" cy="6" r="0.800" fill="#555"/><circle cx="41" cy="8.500" r="0.800" fill="#555"/></svg>
<svg class="a" style="left:456px;top:445px" width="10" height="10" viewBox="0 0 10 10"><path d="M5 1v8M1 5h8" stroke="#555" stroke-width="1"/></svg>
<div class="a" style="left:495px;top:440px;width:39px;height:18px;background:#fff;border-radius:0 0 4px 4px"></div>
<div id="t93" class="t" style="left:501.8px;top:442.60px;font-size:10px;color:#222;font-weight:bold;transform:scaleX(0.8354);">Sheet1</div>
<div class="a" style="left:502px;top:454.600px;width:27px;height:1.500px;background:#1e7145"></div>
<svg class="a" style="left:560px;top:444px" width="40" height="12" viewBox="0 0 40 12"><path d="M10.800 3.200l-3 2.800 3 2.800M29 3.200l3 2.800-3 2.800" fill="none" stroke="#a6a6a6" stroke-width="1.100"/></svg>
<div class="a" style="left:0;top:461px;width:800px;height:8px;background:#f3f3f3"></div>
<div id="t94" class="t" style="left:-21px;top:461.80px;font-size:9px;color:#222;transform:scaleX(0.9086);">essibility: Investigate</div>
<div id="t95" class="t" style="left:436.5px;top:462.00px;font-size:8.5px;color:#444;transform:scaleX(0.8427);">Average: 25</div>
<div id="t96" class="t" style="left:520px;top:462.00px;font-size:8.5px;color:#444;transform:scaleX(0.9023);">Count: 8</div>
<div id="t97" class="t" style="left:559px;top:462.00px;font-size:8.5px;color:#444;transform:scaleX(0.8519);">Sum: 100</div>
<div class="a" style="left:601.500px;top:462px;width:26px;height:8px;background:#dedede"></div>
<svg class="a" style="left:600px;top:460px" width="200" height="9" viewBox="0 0 200 9"><g fill="none" stroke="#4a4a4a" stroke-width="0.800"><rect x="10.500" y="4.300" width="7.500" height="8"/><path d="M13 4.300v5M15.500 4.300v5M10.500 7h7.500"/><rect x="37.800" y="4.300" width="7.500" height="8"/><path d="M39.500 6h4.200v3.500M39.500 6v3.500M37.800 8h1.700M43.700 8h1.600"/><rect x="64.800" y="4.300" width="7.500" height="8"/><path d="M68.500 4.300v5M64.800 6.800h7.500"/></g><path d="M85 8.500h4M93 8.500h67" stroke="#666" stroke-width="0.900"/><rect x="123" y="5.500" width="2.500" height="4" fill="#444"/><path d="M163 8.500h4M165 6.500v3" stroke="#666" stroke-width="0.900"/></svg>
<div id="t98" class="t" style="left:777px;top:462.00px;font-size:8.5px;color:#444;transform:scaleX(0.7934);">90%</div>
<div class="a" style="left:611.500px;top:154px;width:188.500px;height:307px;background:#f3f3f3;border-left:1px solid #e6e6e6;box-sizing:border-box"></div>
<div id="t99" class="t" style="left:621px;top:169.50px;font-size:11px;color:#2a2a2a;-webkit-text-stroke:0.350px currentColor;transform:scaleX(0.9246);">Format Axis</div>
<svg class="a" style="left:750px;top:168px" width="44" height="12" viewBox="0 0 44 12"><path d="M2.500 4l4 4 4-4" fill="none" stroke="#444" stroke-width="1"/><path d="M30.500 2.500l7 7M37.500 2.500l-7 7" stroke="#444" stroke-width="1"/></svg>
<svg class="a" style="left:623.500px;top:198.500px" width="8" height="6" viewBox="0 0 8 6"><path d="M1 1.200l3 3 3-3" fill="none" stroke="#3c7a9c" stroke-width="1"/></svg>
<div id="t100" class="t" style="left:635.4px;top:194.30px;font-size:9px;color:#2a2a2a;-webkit-text-stroke:0.350px currentColor;transform:scaleX(0.8767);">Axis Options</div>
<div class="a" style="left:635px;top:210.600px;width:45px;height:1.500px;background:#1e7145"></div>
<div id="t101" class="t" style="left:697px;top:194.30px;font-size:9px;color:#333;transform:scaleX(0.8695);">Text Options</div>
<svg class="a" style="left:622px;top:218px" width="110" height="24" viewBox="0 0 110 24"><g fill="none" stroke="#4a4a4a" stroke-width="1"><path d="M9.500 4.500l7 7-6.500 6.500-7-7z" fill="#fff"/><circle cx="8.300" cy="5.300" r="1.500"/><path d="M8.300 6.800v3.500"/><path d="M14.500 7.200c3.200.6 4.800 3.600 4.300 8.800" stroke="#555" stroke-width="1.800"/><path d="M39 4.500l7 5.300-2.600 7.700h-8.800l-2.600-7.700z"/><path d="M35.200 17.500l-1.200 2.700M42.800 17.500l1.200 2.700"/></g><rect x="55.600" y="1.300" width="21.100" height="21.200" rx="3" fill="#fff" stroke="#b4b4b4" stroke-width="0.900"/><rect x="63" y="7.800" width="10.500" height="10.600" fill="#1e7145"/><path d="M63 5.400h10.500M63 3.800v3.200M73.500 3.800v3.200M60.500 7.800v10.600M59.200 7.800h2.600M59.200 18.400h2.600" stroke="#3a6f55" stroke-width="0.800" fill="none"/><path d="M68.250 9.300v7.600M64.450 13.100h7.600" stroke="#fff" stroke-width="0.900"/><path d="M68.250 8.800l1.300 1.500h-2.600zM68.250 17.400l1.300-1.500h-2.600zM63.950 13.100l1.500-1.300v2.600zM72.550 13.100l-1.500-1.300v2.600z" fill="#fff"/><g fill="#666"><rect x="87.300" y="9" width="3.800" height="9"/><rect x="92" y="4.500" width="4" height="13.500"/><rect x="97" y="7" width="4" height="11"/></g></svg>
<svg class="a" style="left:620px;top:243px" width="175" height="9" viewBox="0 0 175 9"><path d="M2 6.700h61.800l4.200-4.800 4.200 4.800H170" fill="none" stroke="#dadada" stroke-width="1"/></svg>
<svg class="a" style="left:625px;top:258px" width="8" height="6" viewBox="0 0 8 6"><path d="M1 1.200l3 3 3-3" fill="none" stroke="#333" stroke-width="1"/></svg>
<div id="t102" class="t" style="left:635.7px;top:254.80px;font-size:9px;color:#222;-webkit-text-stroke:0.350px currentColor;transform:scaleX(0.9568);">Alignment</div>
<div id="t103" class="t" style="left:635.4px;top:272.30px;font-size:9px;color:#333;transform:scaleX(0.8881);"><span class="u">V</span>ertical alignment</div>
<div id="t104" class="t" style="left:635.4px;top:292.20px;font-size:9px;color:#333;transform:scaleX(0.8785);">Te<span class="u">x</span>t direction</div>
<div id="t105" class="t" style="left:642px;top:312.30px;font-size:9px;color:#333;transform:scaleX(0.8821);">C<span class="u">u</span>stom angle</div>
<div class="a" style="left:713px;top:271.500px;width:65px;height:14px;background:#fff;border:1px solid #b8b8b8;border-radius:3px;box-sizing:border-box"></div>
<div id="t106" class="t" style="left:718px;top:272.30px;font-size:9px;color:#222;transform:scaleX(0.8474);">Middle Ce...</div>
<svg class="a" style="left:769px;top:276.500px" width="6" height="5" viewBox="0 0 6 5"><path d="M1.200 1.200l1.800 1.900 1.800-1.900" fill="none" stroke="#3a3a3a" stroke-width="1.100"/></svg>
<div class="a" style="left:713px;top:291.500px;width:65px;height:14px;background:#fff;border:1px solid #b8b8b8;border-radius:3px;box-sizing:border-box"></div>
<div class="a" style="left:767px;top:293px;width:1px;height:11px;background:#bbb"></div>
<div id="t107" class="t" style="left:718px;top:292.20px;font-size:9px;color:#222;transform:scaleX(0.8808);">Horizontal</div>
<svg class="a" style="left:769.500px;top:296.500px" width="6" height="5" viewBox="0 0 6 5"><path d="M1.200 1.200l1.800 1.900 1.800-1.900" fill="none" stroke="#3a3a3a" stroke-width="1.100"/></svg>
<div class="a" style="left:725px;top:311px;width:52px;height:14px;background:#fff;border:1px solid #b8b8b8;border-radius:3px;box-sizing:border-box"></div>
<div id="t108" class="t" style="left:729.4px;top:312.00px;font-size:9px;color:#222;transform:scaleX(0.7666);">0&deg;</div>
<svg class="a" style="left:768px;top:312px" width="7" height="12" viewBox="0 0 7 12"><path d="M2.300 3.600l1.800-1.900 1.800 1.900M2.300 8.400l1.800 1.900 1.800-1.900" fill="none" stroke="#3a3a3a" stroke-width="1"/></svg>
<div class="a" style="left:636px;top:330px;width:8px;height:8px;border:1px solid #dadada;border-radius:1.500px;box-sizing:border-box;background:#f8f8f8"></div>
<div id="t109" class="t" style="left:648px;top:328.00px;font-size:8.5px;color:#b9b9b9;transform:scaleX(0.8836);">Resize shape to <span class="u">f</span>it text</div>
<div class="a" style="left:636px;top:346.500px;width:8px;height:8px;border:1px solid #c8c8c8;border-radius:1.500px;box-sizing:border-box;background:#f9f9f9"></div><div class="a" style="left:638.500px;top:349px;width:3px;height:3px;background:#b5b5b5;border-radius:1px"></div>
<div id="t110" class="t" style="left:648px;top:344.50px;font-size:8.5px;color:#b9b9b9;transform:scaleX(0.9300);">Allow text to <span class="u">o</span>verflow shape</div>
<div id="t111" class="t" style="left:635.7px;top:364.40px;font-size:9px;color:#333;transform:scaleX(0.8724);"><span class="u">L</span>eft margin</div>
<div class="a" style="left:725px;top:363.4px;width:52px;height:14px;background:#f5f5f5;border:1px solid #ebebeb;border-radius:3px;box-sizing:border-box"></div>
<div id="t112" class="t" style="left:729.4px;top:364.40px;font-size:8.5px;color:#c6c6c6;transform:scaleX(0.9971);">0.1"</div>
<svg class="a" style="left:768px;top:364.4px" width="7" height="12" viewBox="0 0 7 12"><path d="M2.300 3.600l1.800-1.900 1.800 1.900M2.300 8.400l1.800 1.900 1.800-1.900" fill="none" stroke="#cdcdcd" stroke-width="1"/></svg>
<div id="t113" class="t" style="left:635.7px;top:383.60px;font-size:9px;color:#333;transform:scaleX(0.8877);"><span class="u">R</span>ight margin</div>
<div class="a" style="left:725px;top:382.6px;width:52px;height:14px;background:#f5f5f5;border:1px solid #ebebeb;border-radius:3px;box-sizing:border-box"></div>
<div id="t114" class="t" style="left:729.4px;top:383.60px;font-size:8.5px;color:#c6c6c6;transform:scaleX(0.9971);">0.1"</div>
<svg class="a" style="left:768px;top:383.6px" width="7" height="12" viewBox="0 0 7 12"><path d="M2.300 3.600l1.800-1.900 1.800 1.900M2.300 8.400l1.800 1.900 1.800-1.900" fill="none" stroke="#cdcdcd" stroke-width="1"/></svg>
<div id="t115" class="t" style="left:635.7px;top:402.80px;font-size:9px;color:#333;transform:scaleX(0.8825);"><span class="u">T</span>op margin</div>
<div class="a" style="left:725px;top:401.8px;width:52px;height:14px;background:#f5f5f5;border:1px solid #ebebeb;border-radius:3px;box-sizing:border-box"></div>
<div id="t116" class="t" style="left:729.4px;top:402.80px;font-size:8.5px;color:#c6c6c6;transform:scaleX(0.9457);">0.05"</div>
<svg class="a" style="left:768px;top:402.8px" width="7" height="12" viewBox="0 0 7 12"><path d="M2.300 3.600l1.800-1.900 1.800 1.900M2.300 8.400l1.800 1.900 1.800-1.900" fill="none" stroke="#cdcdcd" stroke-width="1"/></svg>
<div id="t117" class="t" style="left:635.7px;top:421.70px;font-size:9px;color:#333;transform:scaleX(0.9018);"><span class="u">B</span>ottom margin</div>
<div class="a" style="left:725px;top:420.7px;width:52px;height:14px;background:#f5f5f5;border:1px solid #ebebeb;border-radius:3px;box-sizing:border-box"></div>
<div id="t118" class="t" style="left:729.4px;top:421.70px;font-size:8.5px;color:#c6c6c6;transform:scaleX(0.9457);">0.05"</div>
<svg class="a" style="left:768px;top:421.7px" width="7" height="12" viewBox="0 0 7 12"><path d="M2.300 3.600l1.800-1.900 1.800 1.900M2.300 8.400l1.800 1.900 1.800-1.900" fill="none" stroke="#cdcdcd" stroke-width="1"/></svg>
<div class="a" style="left:636px;top:440.500px;width:8px;height:8px;border:1px solid #dadada;border-radius:1.500px;box-sizing:border-box;background:#f8f8f8"></div>
<svg class="a" style="left:636px;top:440.500px" width="8" height="8" viewBox="0 0 8 8"><path d="M2 4l1.500 1.500 2.500-3" fill="none" stroke="#c0c0c0" stroke-width="0.900"/></svg>
<div id="t119" class="t" style="left:648px;top:438.50px;font-size:8.5px;color:#b9b9b9;transform:scaleX(0.9048);"><span class="u">W</span>rap text in shape</div>
<svg class="a" style="left:779px;top:254px" width="12" height="195" viewBox="0 0 12 195"><path d="M3 7l3-4.500 3 4.500z" fill="#555"/><rect x="3.500" y="11" width="5.300" height="151" rx="2.600" fill="#606060"/><path d="M3 187l3 4.500 3-4.500z" fill="#555"/></svg>
</div></body></html>
